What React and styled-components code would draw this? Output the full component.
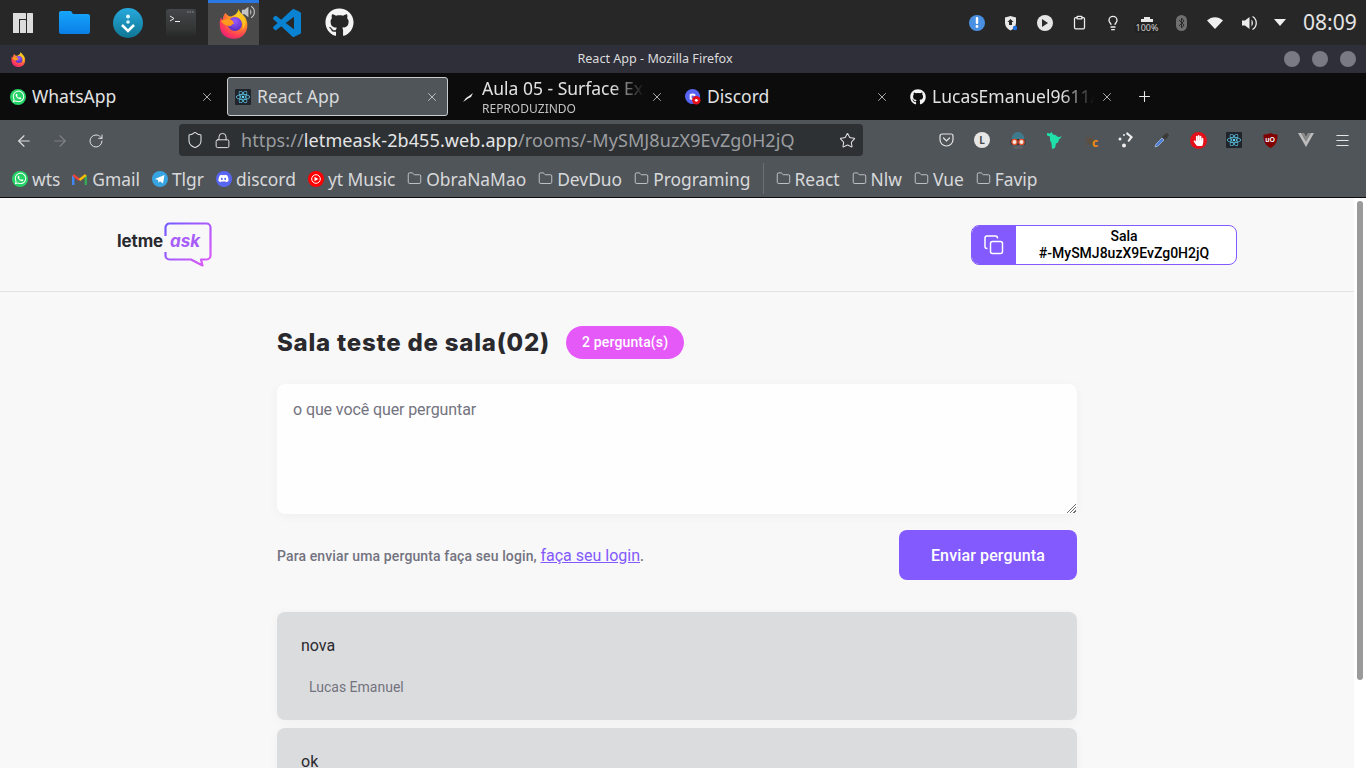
import React, { useId } from 'react';
import styled, { createGlobalStyle } from 'styled-components';
import { ArrowLeft, ArrowRight, RotateCw, Shield, Lock, Star, Folder, X, Plus, Menu, Lightbulb, Clipboard } from 'lucide-react';
import { FaGithub, FaWhatsapp, FaDiscord, FaReact, FaHandPaper } from 'react-icons/fa';

const Global = createGlobalStyle`
  html, body { margin: 0; padding: 0; height: 100%; overflow: hidden; background: #f8f8f8; }
  #root { height: 100%; }
  * { box-sizing: border-box; }
`;

const Screen = styled.div`
  width: 1366px; height: 768px; overflow: hidden; display: flex; flex-direction: column;
  font-family: "Noto Sans", sans-serif;
`;
const Taskbar = styled.header`
  height: 45px; flex: none; background: #272727; display: flex; justify-content: space-between;
`;
const Launchers = styled.nav`
  display: grid; grid-template-columns: 47px repeat(6, 51px); column-gap: 2px;
`;
const Launcher = styled.div`
  position: relative; display: flex; align-items: center; justify-content: center; height: 45px;
  ${p => p.$active && `background: #4a4a4a; border-top: 3px solid #2a78e4; padding-bottom: 1px;`}
`;
const SoundBadge = styled.span`
  position: absolute; right: 4px; top: 2px; display: flex;
`;
const ManjaroMark = styled.svg`
  margin-right: 1px;
`;
const TrayRow = styled.div`
  display: flex; align-items: center; height: 45px;
`;
const TraySlot = styled.div`
  width: ${p => p.$w || 34}px; display: flex; justify-content: center; align-items: center; color: #eee; position: relative;
`;
const BatteryIcon = styled.svg`
  margin-bottom: 2px;
`;
const BatteryLabel = styled.span`
  position: absolute; top: 5px; left: 50%; transform: translateX(-50%);
  font: 9px "Noto Sans", sans-serif; color: #ccc; background: #222; border-radius: 4px; padding: 0 1px; line-height: 11px;
`;
const Clock = styled.div`
  font: 21px/45px "Noto Sans", sans-serif; color: #e4e4e4; width: 72px; padding-left: 9px;
`;
const TitleBar = styled.div`
  height: 28px; flex: none; background: #2f2f3a; display: flex; align-items: center; padding: 0 10px 0 11px;
`;
const WindowTitle = styled.div`
  flex: 1; text-align: center; font-size: 12.6px; color: #dcdcdc; margin-top: -2px;
`;
const WindowButtons = styled.div`
  display: flex; gap: 12px;
`;
const WindowButton = styled.span`
  width: 16px; height: 16px; border-radius: 50%; background: #7a7a84;
`;
const TabBar = styled.div`
  height: 47px; flex: none; background: #0c0c0d; display: flex; align-items: center; padding-left: 2px; gap: 4px;
`;
const Tab = styled.div`
  width: 221px; height: 39px; display: flex; align-items: center; padding: 0 9px 0 8px; gap: 6px; border-radius: 3px;
  color: #e2e2e2;
  ${p => p.$active ? `background: #50555a; border: 1px solid #c9cbcd; padding: 0 8px 0 7px;` : ''}
`;
const TabText = styled.div`
  flex: 1; min-width: 0; overflow: hidden; white-space: nowrap; padding-bottom: 1px;
  ${p => p.$fade && `-webkit-mask-image: linear-gradient(to right, #000 80%, transparent 100%); mask-image: linear-gradient(to right, #000 80%, transparent 100%);`}
`;
const TabTitle = styled.div`
  font-size: 17.5px; line-height: 24px; color: ${p => p.$active ? '#d7d9db' : '#e2e2e2'};
`;
const TabSub = styled.div`
  font-size: 12px; line-height: 14px; color: #c4c4c4; margin-top: 2px;
`;
const TabClose = styled(X)`
  flex: none; color: #ddd;
`;
const NewTab = styled.div`
  color: #e8e8e8; display: flex; margin-left: 9px;
`;
const NavBar = styled.div`
  height: 40px; flex: none; background: #50555a; display: flex; align-items: center; padding: 0 6px;
`;
const NavButton = styled.div`
  width: 36px; display: flex; justify-content: center; padding-top: 1px; color: ${p => p.$off ? '#7e8286' : '#dfe0e1'};
`;
const UrlBar = styled.div`
  margin-left: 65px; width: 684px; height: 32px; background: #2e3134; border-radius: 4px; display: flex; align-items: center;
  padding: 0 7px 0 7px; color: #dfe0e1;
`;
const UrlIcon = styled.span`
  display: flex; width: ${p => p.$w}px; flex: none;
`;
const UrlText = styled.div`
  flex: 1; font-size: 18px; white-space: nowrap; color: #9b9da0; letter-spacing: .1px;
  b { font-weight: 400; color: #e4e5e6; }
`;
const Extensions = styled.div`
  margin-left: auto; display: flex;
`;
const ExtSlot = styled.div`
  width: 36px; height: 24px; display: flex; align-items: center; justify-content: center; color: #e4e4e4; position: relative;
`;
const LBadge = styled.span`
  width: 16px; height: 16px; border-radius: 50%; background: #e6e6e6; color: #45494d; font: 700 10px/16px "Noto Sans", sans-serif; text-align: center;
`;
const HandBadge = styled.span`
  width: 17px; height: 17px; border-radius: 50%; background: #e3101a; color: #fff; display: flex; align-items: center; justify-content: center;
`;
const ReactBadge = styled.span`
  width: ${p => p.$s || 16}px; height: ${p => p.$s || 16}px; background: #20232a; color: #61dafb; display: flex; align-items: center; justify-content: center; border-radius: 1px; flex: none;
`;
const ShieldBadge = styled.span`
  position: absolute; left: 0; right: 0; top: 7px; text-align: center; font: 700 7px/9px "Liberation Sans", sans-serif; color: #fff;
`;
const SpiderC = styled.span`
  position: absolute; left: 20px; top: 8px; font: 700 12px/13px "Noto Sans", sans-serif; color: #f08a12;
`;
const Bookmarks = styled.div`
  height: 37px; flex: none; background: #50555a; border-bottom: 1px solid #0c0c0d; display: flex; align-items: center; padding-left: 12px; gap: 12px;
  box-sizing: content-box;
`;
const Bookmark = styled.div`
  display: flex; align-items: center; gap: ${p => p.$gap || 4}px; font-size: 17.4px; color: #d8d9da; white-space: nowrap;
`;
const BookmarkFolder = styled(Folder)`
  flex: none; color: #d8d9da;
`;
const Separator = styled.div`
  width: 1px; height: 31px; background: #6c7074;
`;
const Round = styled.span`
  width: ${p => p.$s || 16}px; height: ${p => p.$s || 16}px; border-radius: 50%; background: ${p => p.$bg}; color: #fff; display: flex; align-items: center; justify-content: center; flex: none;
`;
const Viewport = styled.div`
  flex: 1; min-height: 0; display: flex;
`;
const Page = styled.div`
  flex: 1; min-width: 0; background: #f8f8f8; overflow: hidden; font-family: Roboto, sans-serif;
`;
const Scrollbar = styled.div`
  width: 12px; flex: none; background: #fff; padding: 3px;
`;
const Thumb = styled.div`
  height: 479px; background: #9a9a9a; border-radius: 3px;
`;
const PageHeader = styled.div`
  border-bottom: 1px solid #e2e2e2; padding: 24px;
`;
const HeaderInner = styled.div`
  max-width: 1120px; margin: 0 auto; display: flex; justify-content: space-between; align-items: center;
`;
const Logo = styled.div`
  position: relative; width: 95px; height: 45px; display: flex; align-items: center; gap: 7px; padding-bottom: 8px;
`;
const LogoWord = styled.span`
  font: ${p => p.$ask ? 'italic 700 17px' : '700 17px'}/20px Inter, sans-serif;
  letter-spacing: ${p => p.$ask ? '0' : '-.1px'};
  color: ${p => p.$ask ? '#a85cf9' : '#29292e'};
`;
const LogoBubble = styled.svg`
  position: absolute; left: 47px; top: 0;
`;
const RoomCode = styled.button`
  width: 266px; height: 40px; padding: 0; border: 1px solid #835afd; border-radius: 8px; background: #fff; overflow: hidden;
  display: flex; align-items: stretch; font: 500 14px/17px Roboto, sans-serif; color: #000; cursor: pointer;
`;
const CopyIcon = styled.span`
  width: 44px; flex: none; background: #835afd; display: flex; align-items: center; justify-content: center;
`;
const CodeText = styled.span`
  flex: 1; display: flex; align-items: center; justify-content: center; text-align: center; padding-right: 4px;
`;
const Main = styled.main`
  max-width: 800px; margin: 0 auto; padding-top: 34px;
`;
const RoomTitle = styled.div`
  display: flex; align-items: center; gap: 16px; height: 33px; margin-bottom: 25px;
`;
const Heading = styled.h1`
  margin: 0; font: 800 24px/33px Inter, sans-serif; color: #29292e; letter-spacing: .78px;
`;
const Pill = styled.span`
  height: 33px; padding: 0 16px; border-radius: 9999px; background: #e559f9; color: #fff; font: 500 14px/33px Roboto, sans-serif; letter-spacing: .15px;
`;
const Textarea = styled.textarea`
  display: block; width: 100%; height: 130px; min-height: 130px; border: 0; border-radius: 8px; padding: 16px; background: #fefefe;
  box-shadow: 0 2px 12px rgba(0,0,0,.04); font: 16px/19px Roboto, sans-serif; color: #29292e; outline: none; letter-spacing: -.1px;
  &::placeholder { color: #737380; opacity: 1; }
  &::-webkit-resizer {
    background:
      linear-gradient(135deg, #fefefe 50%, transparent 50%) bottom 1px right 1px / 11px 11px no-repeat,
      repeating-linear-gradient(135deg, #fefefe 0 1.4px, #6f6f6f 1.4px 2.4px) bottom 1px right 1px / 11px 11px no-repeat;
  }
`;
const FormFooter = styled.div`
  display: flex; justify-content: space-between; align-items: center; margin-top: 16px;
`;
const LoginNote = styled.span`
  font: 500 14px Roboto, sans-serif; color: #737380; letter-spacing: .12px;
`;
const LoginLink = styled.a`
  font: 400 16px Roboto, sans-serif; color: #835afd; text-decoration: underline; cursor: pointer; letter-spacing: 0;
`;
const SendButton = styled.button`
  height: 50px; padding: 0 32px; border: 0; border-radius: 8px; background: #835afd; color: #fff; font: 500 16px Roboto, sans-serif; cursor: pointer; letter-spacing: .13px;
`;
const QuestionList = styled.div`
  margin-top: 32px; display: flex; flex-direction: column; gap: 8px;
`;
const Question = styled.article`
  height: 108px; flex: none; border-radius: 8px; background: #dbdcdd; padding: 24px; box-shadow: 0 2px 12px rgba(0,0,0,.04);
`;
const QuestionText = styled.p`
  margin: 0; font: 16px/19px Roboto, sans-serif; color: #29292e;
`;
const Author = styled.div`
  margin-top: 23px; padding-left: 8px; font: 14px/18px Roboto, sans-serif; color: #737380;
`;

function Firefox({ size }) {
  const id = useId();
  return (
    <svg width={size} height={size} viewBox="0 0 32 32">
      <defs>
        <radialGradient id={id + 'a'} cx="0.75" cy="0.15" r="1">
          <stop offset="0" stopColor="#ffe226" />
          <stop offset="0.4" stopColor="#ff9a1f" />
          <stop offset="0.75" stopColor="#ff3f55" />
          <stop offset="1" stopColor="#e3197f" />
        </radialGradient>
        <radialGradient id={id + 'b'} cx="0.5" cy="0.3" r="0.8">
          <stop offset="0" stopColor="#9a5cff" />
          <stop offset="1" stopColor="#4f25b8" />
        </radialGradient>
      </defs>
      <path fill={`url(#${id}a)`} d="M21 0c.5 4 4 5 7 9 3.500 6 3 14-2 19-5 5-15 5-21 0C0 23 0 14 2 9c.5 1 1 2 2 3 0-3 1-6 3-8 1 2 3 4 6 4 3-1 7-3 8-8z" />
      <circle cx="17" cy="16" r="7.500" fill={`url(#${id}b)`} />
      <path fill="#ff9a1f" d="M2 13c4-3 9-3 12-1 1 .8 1.500 2.500 2 4-2 0-3 1-3 2-4 0-8-1-11-5z" />
      <path fill="#ffc31f" d="M21 0c0 4 5 6 7 11 .5 3 0 8-3 11 1-4 1-8-2-11-2-3-3-7-2-11z" />
    </svg>
  );
}

function VSCode() {
  return (
    <svg width="28" height="28" viewBox="0 0 24 24">
      <path fill="#0a82d2" d="M23.15 2.587L18.21.21a1.494 1.494 0 0 0-1.705.29l-9.46 8.63-4.12-3.128a.999.999 0 0 0-1.276.057L.327 7.261A1 1 0 0 0 .326 8.74L3.899 12 .326 15.26a1 1 0 0 0 .001 1.479L1.65 17.94a.999.999 0 0 0 1.276.057l4.12-3.128 9.46 8.63a1.492 1.492 0 0 0 1.704.29l4.942-2.377A1.5 1.5 0 0 0 24 20.06V3.939a1.5 1.5 0 0 0-.85-1.352zm-5.146 14.861L10.826 12l7.178-5.448v10.896z" />
    </svg>
  );
}

function Manjaro() {
  return (
    <ManjaroMark width="20" height="20" viewBox="0 0 20 20" fill="#dcdcdc">
      <rect x="0" y="0" width="13" height="6" rx="0.5" />
      <rect x="0" y="0" width="6" height="20" rx="0.5" />
      <rect x="7" y="7" width="6" height="13" rx="0.5" />
      <rect x="14" y="0" width="6" height="20" rx="0.5" />
    </ManjaroMark>
  );
}

function BlueFolder() {
  const id = useId();
  return (
    <svg width="31" height="23" viewBox="0 0 31 23">
      <defs>
        <linearGradient id={id} x1="0" y1="0" x2="0" y2="1">
          <stop offset="0" stopColor="#17a6fb" />
          <stop offset="1" stopColor="#0a7ee6" />
        </linearGradient>
      </defs>
      <path fill={`url(#${id})`} d="M2 0h9c1 0 1.500.5 2 1.500L14 3h15c1 0 2 1 2 2v16c0 1-1 2-2 2H2c-1 0-2-1-2-2V2C0 1 1 0 2 0z" />
    </svg>
  );
}

function Downloader() {
  const id = useId();
  return (
    <svg width="30" height="30" viewBox="0 0 30 30">
      <defs>
        <linearGradient id={id} x1="0" y1="0" x2="0" y2="1">
          <stop offset="0" stopColor="#27a9dd" />
          <stop offset="1" stopColor="#0f7693" />
        </linearGradient>
      </defs>
      <circle cx="15" cy="15" r="15" fill={`url(#${id})`} />
      <circle cx="15" cy="8.500" r="2" fill="#dff4fb" />
      <circle cx="15" cy="14" r="1.800" fill="#dff4fb" />
      <path d="M9 17l6 6 6-6" fill="none" stroke="#fff" strokeWidth="2.600" />
    </svg>
  );
}

function Terminal() {
  const id = useId();
  return (
    <svg width="30" height="28" viewBox="0 0 30 28">
      <defs>
        <linearGradient id={id} x1="0" y1="0" x2="0" y2="1">
          <stop offset="0" stopColor="#44474a" />
          <stop offset="0.7" stopColor="#333634" />
          <stop offset="1" stopColor="#262826" />
        </linearGradient>
      </defs>
      <rect width="30" height="28" rx="3" fill={`url(#${id})`} />
      <path d="M4 7l4 2.500L4 12" fill="none" stroke="#eee" strokeWidth="1" />
      <path d="M9 12.500h5" stroke="#eee" strokeWidth="1" />
      <path d="M21 3h7" stroke="#777" strokeWidth="1.500" strokeDasharray="1.500 1" />
    </svg>
  );
}

const Speaker = ({ size, color }) => (
  <svg width={size} height={size} viewBox="0 0 16 16" fill={color}>
    <path d="M1 5.500h3L8.500 2v12L4 10.500H1z" />
    <path d="M10.500 4.500a5 5 0 0 1 0 7z" />
    <path d="M11.500 1.500a7.500 7.500 0 0 1 0 13" fill="none" stroke={color} strokeWidth="1.300" />
  </svg>
);

function WhatsAppIcon() {
  return <Round $bg="#25d366" $s={16}><FaWhatsapp size={13} /></Round>;
}

function Gmail() {
  return (
    <svg width="15" height="12" viewBox="0 0 15 12" fill="none" strokeWidth="2.400">
      <path d="M1.200 12V2.500" stroke="#4285f4" />
      <path d="M13.800 12V2.500" stroke="#34a853" />
      <path d="M1.200 2L7.500 7" stroke="#ea4335" />
      <path d="M7.500 7L13.800 2" stroke="#fbbc04" />
    </svg>
  );
}

function Telegram() {
  return (
    <svg width="16" height="16" viewBox="0 0 16 16">
      <circle cx="8" cy="8" r="8" fill="#37a4e2" />
      <path d="M3 8l9.500-4-1.500 8.500-3-2.200-1.500 1.500-.5-2.800z" fill="#fff" />
    </svg>
  );
}

function YTMusic() {
  return (
    <svg width="16" height="16" viewBox="0 0 16 16">
      <circle cx="8" cy="8" r="8" fill="#f00" />
      <circle cx="8" cy="8" r="4.300" fill="none" stroke="#fff" strokeWidth="1" />
      <path d="M6.500 5.800L10.300 8l-3.800 2.200z" fill="#fff" />
    </svg>
  );
}

function DiscordTab() {
  return (
    <svg width="16" height="16" viewBox="0 0 17 17">
      <circle cx="8" cy="8" r="8" fill="#5865f2" />
      <path d="M5 5.500c2-1 4-1 6 0v2H9V7H7v3h4v1c-2 1-4 1-6 0z" fill="#fff" />
      <circle cx="12" cy="12" r="4.500" fill="#e3101a" />
      <circle cx="12" cy="12" r="1.500" fill="#fff" />
    </svg>
  );
}

function AulaFavicon() {
  return (
    <svg width="16" height="16" viewBox="0 0 16 16">
      <path d="M3 13l3-4 3-2 4-3-2 4-3 1.500-2 1.500z" fill="#eee" />
    </svg>
  );
}

function PocketIcon() {
  return (
    <svg width="15" height="14" viewBox="0 0 15 14" fill="none" stroke="#e4e4e4" strokeWidth="1.200">
      <path d="M1 3a2 2 0 0 1 2-2h9a2 2 0 0 1 2 2v3.500a6.500 6.500 0 0 1-13 0z" />
      <path d="M4.500 5l3 3 3-3" strokeLinecap="round" />
    </svg>
  );
}

function MaskIcon() {
  return (
    <svg width="16" height="17" viewBox="0 0 16 17">
      <path d="M1.500 8C1.500 3 4.500 0 8 0s6.500 3 6.500 8z" fill="#3d7a8c" />
      <rect x="0.500" y="7" width="15" height="6" rx="2.500" fill="#2b3035" />
      <circle cx="4.500" cy="10" r="2.600" fill="#f4e8dc" stroke="#e8502f" strokeWidth="1.300" />
      <circle cx="11.500" cy="10" r="2.600" fill="#f4e8dc" stroke="#e8502f" strokeWidth="1.300" />
      <path d="M3.500 13.500h9V17h-9z" fill="#5d6064" />
    </svg>
  );
}

function DragonIcon() {
  return (
    <svg width="15" height="17" viewBox="0 0 15 17">
      <path d="M0 1l3 .5L4.500 0 6 2.500l2.500.5 2.500 2 4-.5-3 3-1 3-2 1-1 4.500L5 17l-.5-5.500L3 8V4.500L0 3.500z" fill="#1fe0a8" />
    </svg>
  );
}

function SpiderIcon() {
  return (
    <svg width="14" height="15" viewBox="0 0 14 15" fill="none" stroke="#5d4e42" strokeWidth="1">
      <ellipse cx="7" cy="8" rx="2.500" ry="3" fill="#5d4e42" />
      <path d="M5 6L2 2M9 6l3-4M4.500 8H1M9.500 8H13M5 10l-3 4M9 10l3 4" />
    </svg>
  );
}

function DotsIcon() {
  return (
    <svg width="16" height="16" viewBox="0 0 16 16" fill="#eee">
      <circle cx="2" cy="7" r="1.500" />
      <circle cx="6" cy="3" r="1" />
      <circle cx="6" cy="13.500" r="2" />
      <path d="M9 0l6 5-4 5-1.500-1 2.500-4-4-3z" />
    </svg>
  );
}

function DropperIcon() {
  return (
    <svg width="16" height="16" viewBox="0 0 16 16">
      <path d="M1 15l1-3 6-6 2 2-6 6z" fill="#4a7fd8" stroke="#c8d4e8" strokeWidth=".6" />
      <path d="M8 5l3-3 2-1 2 2-1 2-3 3z" fill="#3a3a3a" />
    </svg>
  );
}

function UBlockIcon() {
  return (
    <svg width="15" height="15" viewBox="0 0 15 15">
      <path d="M.5 1.500C3 1.500 5.500 1 7.500 0c2 1 4.500 1.500 7 1.500 0 6-1 10.500-7 13.500C1.500 12 .5 7.500 .5 1.500z" fill="#800000" />
    </svg>
  );
}

function VueIcon() {
  return (
    <svg width="16" height="14" viewBox="0 0 16 14">
      <path d="M0 0h3.200L8 8.300 12.800 0H16L8 14z" fill="#bcbcbc" />
      <path d="M3.200 0h2.800L8 3.500 10 0h2.800L8 8.300z" fill="#8a8a8a" />
    </svg>
  );
}

function Bubble() {
  const id = useId();
  return (
    <LogoBubble width="48" height="45" viewBox="0 0 48 45" fill="none">
      <defs>
        <linearGradient id={id} gradientUnits="userSpaceOnUse" x1="0" y1="0" x2="48" y2="44">
          <stop offset="0" stopColor="#6f5cff" />
          <stop offset="1" stopColor="#e559f9" />
        </linearGradient>
      </defs>
      <path
        stroke={`url(#${id})`} strokeWidth="2.200" strokeLinejoin="round"
        d="M1.500 14V5.500a4 4 0 0 1 4-4H42.500a4 4 0 0 1 4 4V33.500a4 4 0 0 1-4 4H37L38.500 43.500 27 37.500H5.500a4 4 0 0 1-4-4V30"
      />
    </LogoBubble>
  );
}

const launchers = [
  <Manjaro key="m" />, <BlueFolder key="f" />, <Downloader key="d" />, <Terminal key="t" />,
];

const tabs = [
  { key: 'w', icon: <WhatsAppIcon />, title: 'WhatsApp' },
  { key: 'r', icon: <ReactBadge $s={16}><FaReact size={14} /></ReactBadge>, title: 'React App', active: true },
  { key: 'a', icon: <AulaFavicon />, title: 'Aula 05 - Surface Explorer', sub: 'REPRODUZINDO', fade: true },
  { key: 'd', icon: <DiscordTab />, title: 'Discord' },
  { key: 'g', icon: <FaGithub size={16} color="#f2f2f2" />, title: 'LucasEmanuel9611/letmeask', fade: true },
];

const folders = ['ObraNaMao', 'DevDuo', 'Programing'];
const folders2 = ['React', 'Nlw', 'Vue', 'Favip'];

export default function App() {
  return (
    <Screen>
      <Global />
      <Taskbar>
        <Launchers>
          {launchers.map(l => <Launcher key={l.key}>{l}</Launcher>)}
          <Launcher $active>
            <Firefox size={30} />
            <SoundBadge><Speaker size={14} color="#c4c4c4" /></SoundBadge>
          </Launcher>
          <Launcher><VSCode /></Launcher>
          <Launcher><FaGithub size={29} color="#f4f4f4" /></Launcher>
        </Launchers>
        <TrayRow>
          <TraySlot>
            <Round $bg="#4a90e2"><svg width="4" height="11" viewBox="0 0 4 11" fill="#fff"><rect x="0.800" width="2.400" height="7" rx="1" /><circle cx="2" cy="9.500" r="1.400" /></svg></Round>
          </TraySlot>
          <TraySlot>
            <svg width="14" height="16" viewBox="0 0 14 16">
              <path d="M1 2.500L6.500 1 12 2.500V8c0 3.500-2.500 6-5.500 7.500C3.500 14 1 11.500 1 8z" fill="#e8e8e8" />
              <path d="M6.500 4l3 3H8v3H5V7H3.500z" fill="#272727" />
              <circle cx="11" cy="13" r="2.200" fill="#1f6fe0" />
            </svg>
          </TraySlot>
          <TraySlot>
            <Round $bg="#e6e6e6"><svg width="6" height="8" viewBox="0 0 6 8" fill="#2a2a2a"><path d="M0 0l6 4-6 4z" /></svg></Round>
          </TraySlot>
          <TraySlot><Clipboard size={15} strokeWidth={2} /></TraySlot>
          <TraySlot><Lightbulb size={16} strokeWidth={2} /></TraySlot>
          <TraySlot>
            <BatteryIcon width="12" height="10" viewBox="0 0 12 10"><rect y="2" width="12" height="8" fill="#e8e8e8" /><rect x="3" width="6" height="2" fill="#e8e8e8" /><path d="M4.500 7v3M7.500 7v3" stroke="#4caf50" /></BatteryIcon>
            <BatteryLabel>100%</BatteryLabel>
          </TraySlot>
          <TraySlot>
            <svg width="11" height="16" viewBox="0 0 11 16">
              <rect width="11" height="16" rx="5.500" fill="#6f6f6f" />
              <path d="M3 5l5 5-2.500 3V3L8 6l-5 5" fill="none" stroke="#2b2b2b" strokeWidth="1" />
            </svg>
          </TraySlot>
          <TraySlot>
            <svg width="16" height="12" viewBox="0 0 16 12" fill="#f0f0f0"><path d="M0 3.500C4.500-1 11.500-1 16 3.500L8 12z" /></svg>
          </TraySlot>
          <TraySlot><Speaker size={16} color="#ececec" /></TraySlot>
          <TraySlot $w={28}>
            <svg width="12" height="7" viewBox="0 0 12 7" fill="#f0f0f0"><path d="M0 0h12L6 7z" /></svg>
          </TraySlot>
          <Clock>08:09</Clock>
        </TrayRow>
      </Taskbar>

      <TitleBar>
        <Firefox size={15} />
        <WindowTitle>React App - Mozilla Firefox</WindowTitle>
        <WindowButtons>
          <WindowButton /><WindowButton /><WindowButton />
        </WindowButtons>
      </TitleBar>

      <TabBar>
        {tabs.map(t => (
          <Tab key={t.key} $active={t.active}>
            {t.icon}
            <TabText $fade={t.fade}>
              <TabTitle $active={t.active}>{t.title}</TabTitle>
              {t.sub && <TabSub>{t.sub}</TabSub>}
            </TabText>
            <TabClose size={14} strokeWidth={1.300} />
          </Tab>
        ))}
        <NewTab><Plus size={17} strokeWidth={1.500} /></NewTab>
      </TabBar>

      <NavBar>
        <NavButton><ArrowLeft size={18} strokeWidth={1.500} /></NavButton>
        <NavButton $off><ArrowRight size={18} strokeWidth={1.500} /></NavButton>
        <NavButton><RotateCw size={16} strokeWidth={1.500} /></NavButton>
        <UrlBar>
          <UrlIcon $w={28}><Shield size={18} strokeWidth={1.400} /></UrlIcon>
          <UrlIcon $w={27}><Lock size={17} strokeWidth={1.400} /></UrlIcon>
          <UrlText>https://<b>letmeask-2b455.web.app</b>/rooms/-MySMJ8uzX9EvZg0H2jQ</UrlText>
          <Star size={17} strokeWidth={1.500} />
        </UrlBar>
        <Extensions>
          <ExtSlot><PocketIcon /></ExtSlot>
          <ExtSlot><LBadge>L</LBadge></ExtSlot>
          <ExtSlot><MaskIcon /></ExtSlot>
          <ExtSlot><DragonIcon /></ExtSlot>
          <ExtSlot><SpiderIcon /><SpiderC>c</SpiderC></ExtSlot>
          <ExtSlot><DotsIcon /></ExtSlot>
          <ExtSlot><DropperIcon /></ExtSlot>
          <ExtSlot><HandBadge><FaHandPaper size={11} /></HandBadge></ExtSlot>
          <ExtSlot><ReactBadge $s={16}><FaReact size={14} /></ReactBadge></ExtSlot>
          <ExtSlot><UBlockIcon /><ShieldBadge>uO</ShieldBadge></ExtSlot>
          <ExtSlot><VueIcon /></ExtSlot>
          <ExtSlot><Menu size={17} strokeWidth={1.500} /></ExtSlot>
        </Extensions>
      </NavBar>

      <Bookmarks>
        <Bookmark><WhatsAppIcon />wts</Bookmark>
        <Bookmark $gap={5}><Gmail />Gmail</Bookmark>
        <Bookmark><Telegram />Tlgr</Bookmark>
        <Bookmark><Round $bg="#5865f2"><FaDiscord size={11} /></Round>discord</Bookmark>
        <Bookmark><YTMusic />yt Music</Bookmark>
        {folders.map(f => <Bookmark key={f}><BookmarkFolder size={15} strokeWidth={1.300} />{f}</Bookmark>)}
        <Separator />
        {folders2.map(f => <Bookmark key={f}><BookmarkFolder size={15} strokeWidth={1.300} />{f}</Bookmark>)}
      </Bookmarks>

      <Viewport>
        <Page>
          <PageHeader>
            <HeaderInner>
              <Logo>
                <LogoWord>letme</LogoWord>
                <LogoWord $ask>ask</LogoWord>
                <Bubble />
              </Logo>
              <RoomCode>
                <CopyIcon>
                  <svg width="20" height="20" viewBox="0 0 20 20" fill="none" stroke="#fff" strokeWidth="1.500">
                    <rect x="6.500" y="6.500" width="12" height="12" rx="2" />
                    <path d="M3.500 13.500h-.5a2 2 0 0 1-2-2V3a2 2 0 0 1 2-2h8.500a2 2 0 0 1 2 2v.5" />
                  </svg>
                </CopyIcon>
                <CodeText>Sala<br />#-MySMJ8uzX9EvZg0H2jQ</CodeText>
              </RoomCode>
            </HeaderInner>
          </PageHeader>
          <Main>
            <RoomTitle>
              <Heading>Sala teste de sala(02)</Heading>
              <Pill>2 pergunta(s)</Pill>
            </RoomTitle>
            <form>
              <Textarea placeholder="o que você quer perguntar" />
              <FormFooter>
                <LoginNote>Para enviar uma pergunta faça seu login, <LoginLink>faça seu login</LoginLink>.</LoginNote>
                <SendButton type="button">Enviar pergunta</SendButton>
              </FormFooter>
            </form>
            <QuestionList>
              <Question>
                <QuestionText>nova</QuestionText>
                <Author>Lucas Emanuel</Author>
              </Question>
              <Question>
                <QuestionText>ok</QuestionText>
              </Question>
            </QuestionList>
          </Main>
        </Page>
        <Scrollbar><Thumb /></Scrollbar>
      </Viewport>
    </Screen>
  );
}
